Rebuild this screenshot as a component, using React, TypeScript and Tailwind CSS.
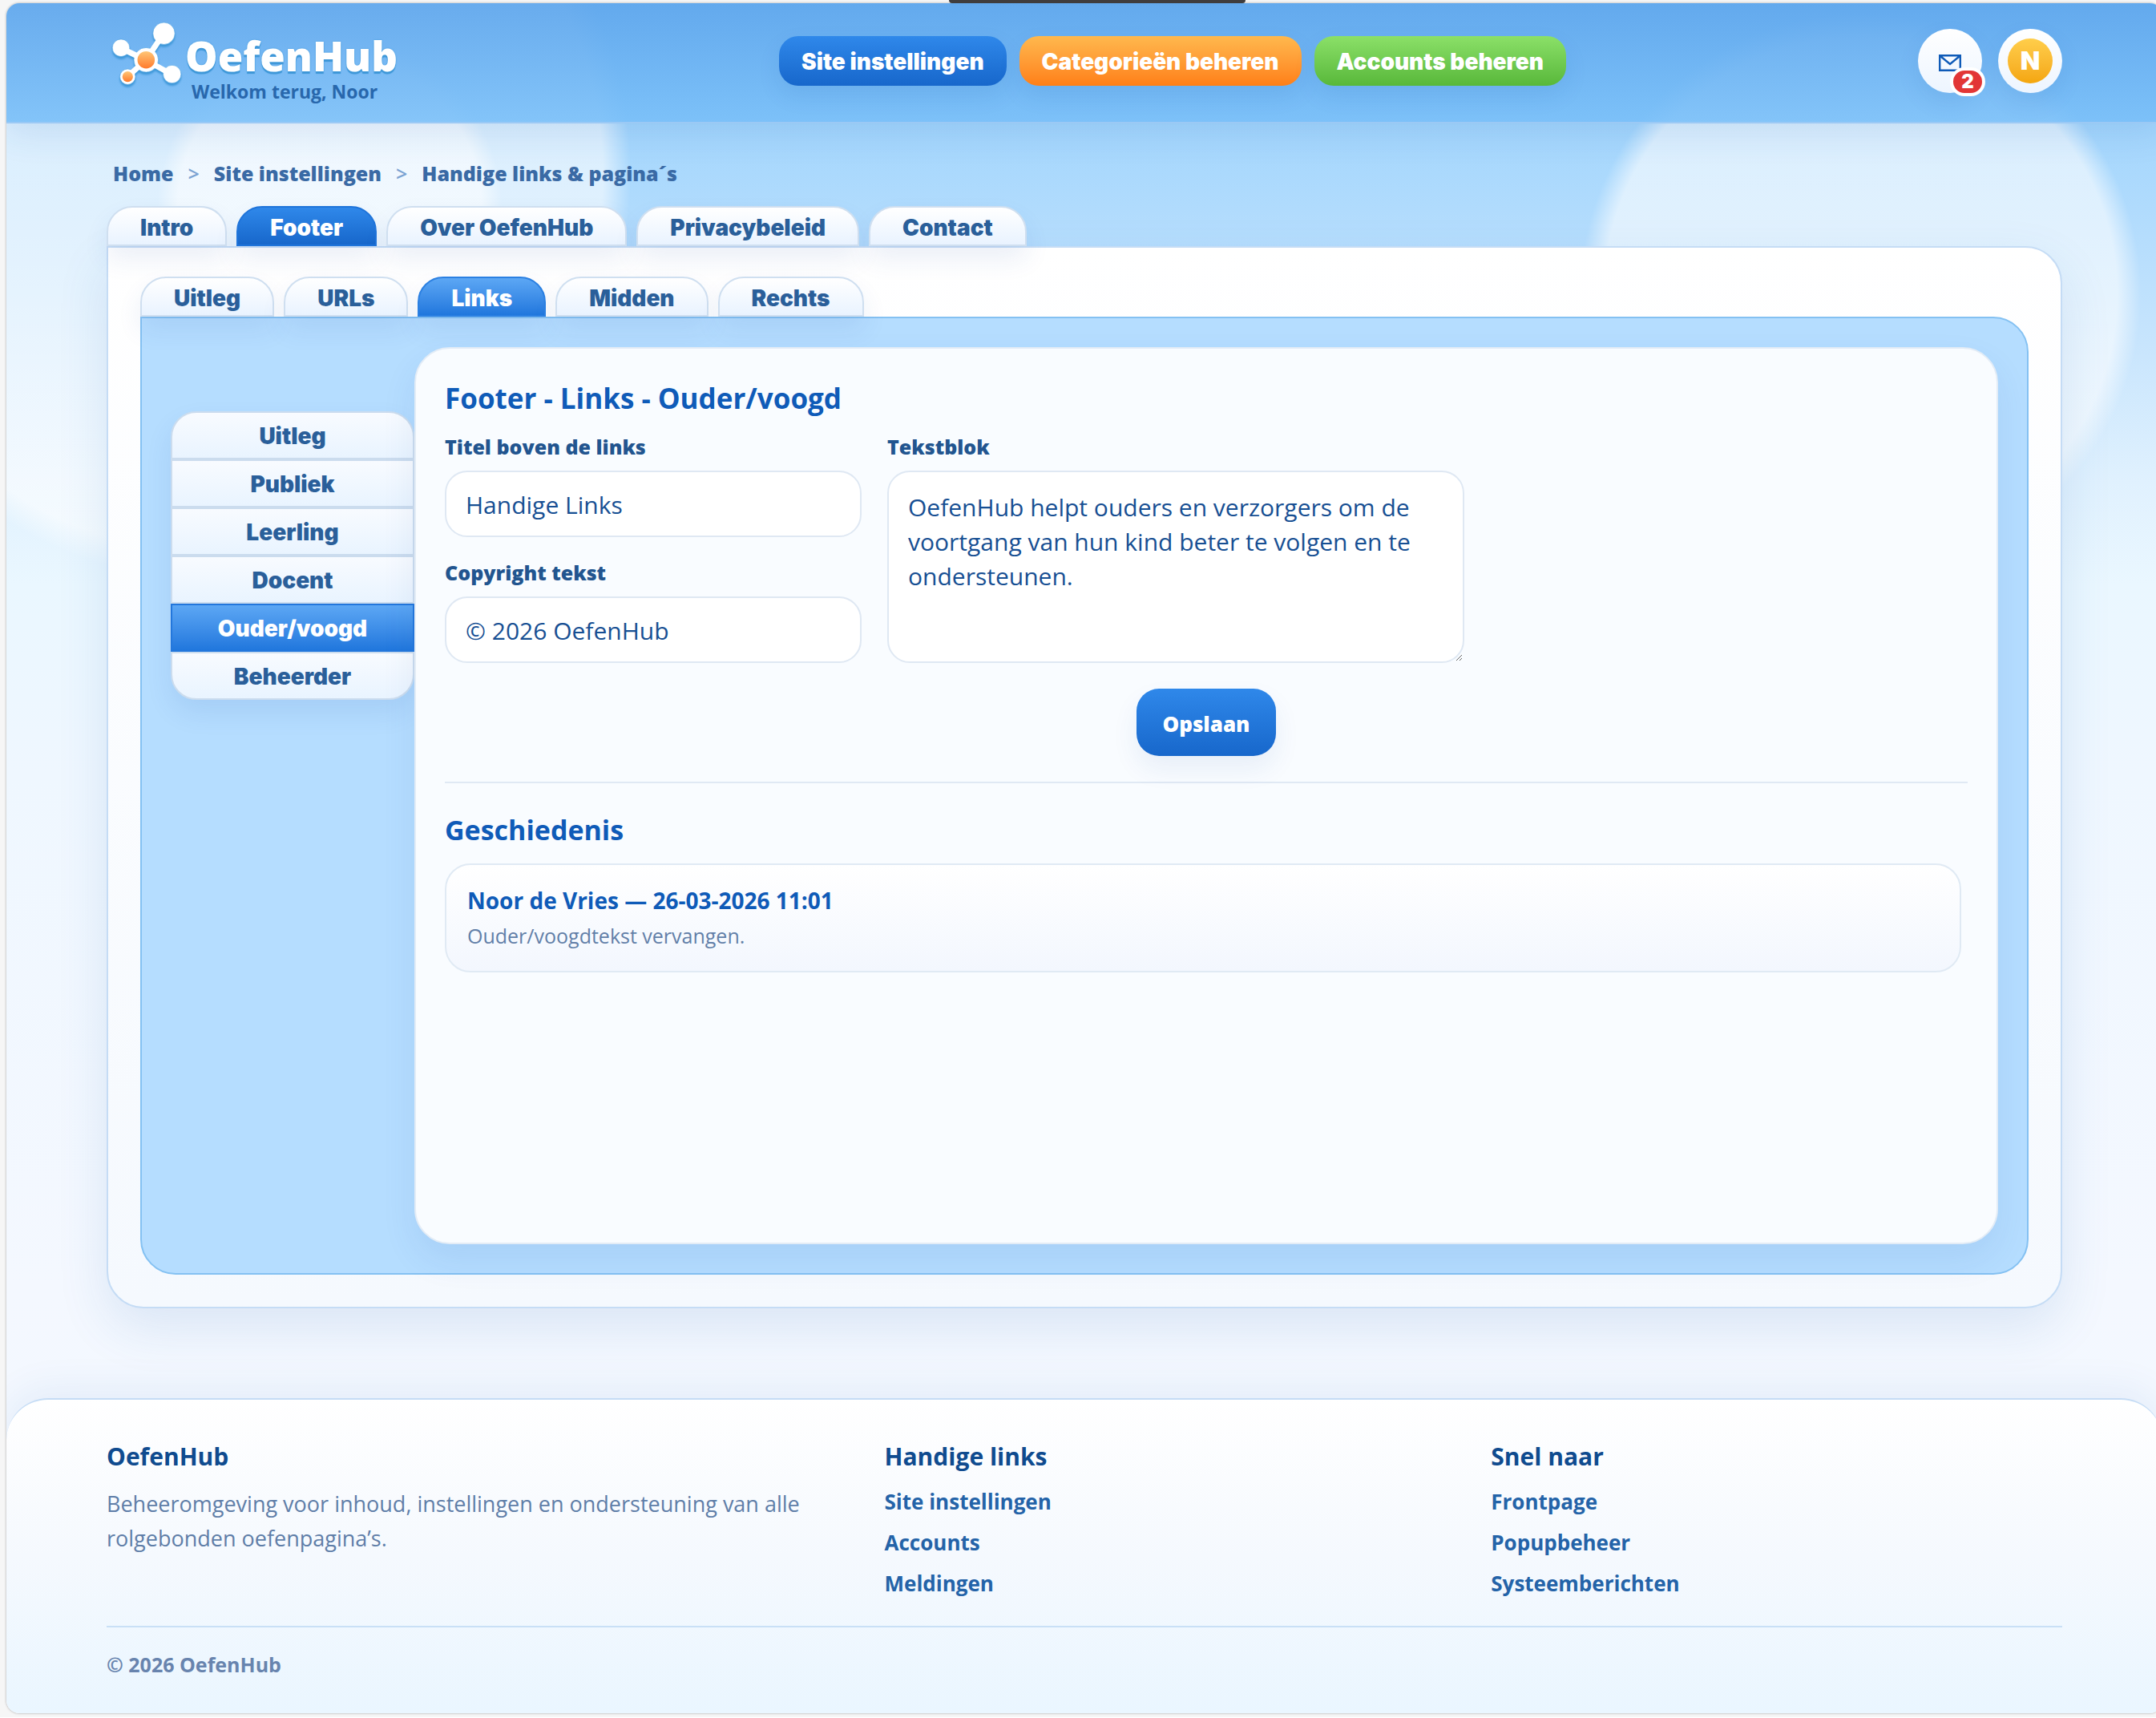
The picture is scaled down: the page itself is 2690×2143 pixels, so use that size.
import { useState } from "react";

const navButtons = [
  { label: "Site instellingen", className: "from-[#2f88ea] to-[#1767cb]" },
  { label: "Categorieën beheren", className: "from-[#ffb84d] to-[#ff7f15]" },
  { label: "Accounts beheren", className: "from-[#8be068] to-[#58b83a]" },
];

const crumbs = ["Home", "Site instellingen", "Handige links & pagina´s"];
const pageTabs = ["Intro", "Footer", "Over OefenHub", "Privacybeleid", "Contact"];
const footerTabs = ["Uitleg", "URLs", "Links", "Midden", "Rechts"];
const roles = ["Uitleg", "Publiek", "Leerling", "Docent", "Ouder/voogd", "Beheerder"];

const footerColumns = [
  { title: "Handige links", links: ["Site instellingen", "Accounts", "Meldingen"] },
  { title: "Snel naar", links: ["Frontpage", "Popupbeheer", "Systeemberichten"] },
];

function LogoMark() {
  return (
    <svg
      viewBox="0 0 98 92"
      className="h-[92px] w-[98px] shrink-0 drop-shadow-[0_3px_1px_#3d97d8]"
      aria-hidden="true"
    >
      <defs>
        <linearGradient id="orange" x1="0" y1="0" x2="0" y2="1">
          <stop offset="0" stopColor="#ffc676" />
          <stop offset="1" stopColor="#ff7a2c" />
        </linearGradient>
      </defs>
      <g fill="#fff" stroke="#4a9fe0" strokeWidth="0.6">
        <circle cx="71.500" cy="17.700" r="13.700" />
        <circle cx="18" cy="35.700" r="10.800" />
        <circle cx="81.700" cy="68.500" r="11.200" />
        <circle cx="26.300" cy="71.700" r="9.700" />
        <circle cx="49.300" cy="50.700" r="15.300" />
      </g>
      <path d="M49 51 69 21M49 51 22 38M49 51 78 67M49 51 29 69" stroke="#fff" strokeWidth="7" />
      <circle cx="49.300" cy="50.700" r="10.800" fill="url(#orange)" />
      <circle cx="26.300" cy="71.700" r="6.600" fill="url(#orange)" />
    </svg>
  );
}

function Header() {
  return (
    <header className="border-b-2 border-[#9bc9f5] bg-linear-to-b from-[#5fa6ec]/92 to-[#77bef8]/88 pt-5 pb-6 shadow-[0_12px_40px_rgba(30,90,170,0.12)]">
      <div className="mx-auto flex w-[91%] max-w-[2440px] items-center justify-between">
        <a href="#" className="flex h-[104px] w-[400px]">
          <LogoMark />
          <span className="flex flex-col pt-3">
            <span className="text-[51px] leading-[66px] font-extrabold text-white [text-shadow:0_3px_1px_#3d97d8,0_0_2px_#3d97d8]">
              OefenHub
            </span>
            <span className="pl-2 text-[23px] leading-6 font-bold text-[#2867ac]">Welkom terug, Noor</span>
          </span>
        </a>

        <nav className="flex gap-4 font-['Inter']">
          {navButtons.map(b => (
            <button
              key={b.label}
              className={`h-[62px] rounded-3xl bg-linear-to-b px-7 pt-0.5 text-[28px] font-black text-white shadow-[0_12px_28px_rgba(30,90,170,0.1)] ${b.className}`}
            >
              {b.label}
            </button>
          ))}
        </nav>

        <div className="flex gap-5 font-['Inter']">
          <button
            aria-label="Berichten"
            className="relative flex size-20 items-center justify-center rounded-full bg-linear-to-b from-white to-[#edf5ff] shadow-[0_12px_28px_rgba(30,90,170,0.1)]"
          >
            <svg viewBox="0 0 28 21" className="mt-1 h-[21px] w-7" fill="none" stroke="#0f5bb8" strokeWidth="2.4">
              <path d="M1.200 1.200h25.600v18.600H1.200zM2 2l12 10L26 2" />
            </svg>
            <span className="absolute -right-1 -bottom-1 flex h-9 w-11 items-center justify-center rounded-full border-4 border-white bg-[#e23636] text-[24px] font-black text-white">
              2
            </span>
          </button>
          <button
            aria-label="Profiel"
            className="flex size-20 items-center justify-center rounded-full bg-linear-to-b from-white to-[#edf5ff] shadow-[0_12px_28px_rgba(30,90,170,0.1)]"
          >
            <span className="flex size-14 items-center justify-center rounded-full bg-linear-to-b from-[#ffce4a] to-[#f4a60b] text-[32px] font-black text-white">
              N
            </span>
          </button>
        </div>
      </div>
    </header>
  );
}

function Tabs({
  items,
  active,
  onSelect,
  activeClass,
}: {
  items: string[];
  active: string;
  onSelect: (item: string) => void;
  activeClass: string;
}) {
  return (
    <div role="tablist" className="flex gap-3 font-['Inter']">
      {items.map(item => (
        <button
          key={item}
          role="tab"
          aria-selected={item === active}
          onClick={() => onSelect(item)}
          className={`h-[50px] rounded-t-[32px] border-2 px-10 pt-1 text-[28px] leading-8 font-black shadow-[0_16px_32px_rgba(30,80,170,0.09)] ${
            item === active
              ? `bg-linear-to-b text-white ${activeClass}`
              : "border-[#cfdff0] bg-linear-to-b from-white to-[#e9f3ff] text-[#2a5f9a]"
          }`}
        >
          {item}
        </button>
      ))}
    </div>
  );
}

function Sidebar() {
  const [role, setRole] = useState("Ouder/voogd");

  return (
    <div className="w-[304px] shrink-0 pt-20 font-['Inter']">
      <div className="flex flex-col rounded-[32px] shadow-[0_16px_32px_rgba(30,80,170,0.1)]">
        {roles.map(r => (
          <button
            key={r}
            onClick={() => setRole(r)}
            className={`h-[60px] border-2 pt-0.5 text-[28px] font-black first:rounded-t-[32px] last:rounded-b-[32px] ${
              r === role
                ? "border-[#2377dc] bg-linear-to-b from-[#5ca7f4] to-[#2077dd] text-white"
                : "border-[#cbdcee] bg-linear-to-b from-[#f8fbff] to-[#e9f4ff] text-[#2a5f9a]"
            }`}
          >
            {r}
          </button>
        ))}
      </div>
    </div>
  );
}

const labelClass = "block text-[25px] leading-8 font-extrabold text-[#22558f]";
const fieldClass = "block w-full rounded-[28px] border-2 border-[#dfe8f3] bg-white px-6 text-[30px] text-[#174f93]";

function FooterForm() {
  const [title, setTitle] = useState("Handige Links");
  const [copyright, setCopyright] = useState("© 2026 OefenHub");
  const [text, setText] = useState(
    "OefenHub helpt ouders en verzorgers om de voortgang van hun kind beter te volgen en te ondersteunen."
  );

  return (
    <form onSubmit={e => e.preventDefault()} className="border-b-2 border-[#e0e9f4] pb-8">
      <h2 className="text-[35px] leading-[52px] font-bold text-[#0f5bb8]">Footer - Links - Ouder/voogd</h2>
      <div className="mt-[18px] flex gap-8">
        <div className="w-[520px]">
          <label htmlFor="titel" className={labelClass}>
            Titel boven de links
          </label>
          <input
            id="titel"
            value={title}
            onChange={e => setTitle(e.target.value)}
            className={`${fieldClass} mt-3.5 h-[83px] pt-0.5`}
          />
          <label htmlFor="copyright" className={`${labelClass} mt-7`}>
            Copyright tekst
          </label>
          <input
            id="copyright"
            value={copyright}
            onChange={e => setCopyright(e.target.value)}
            className={`${fieldClass} mt-3.5 h-[83px] pt-0.5`}
          />
        </div>
        <div className="w-[720px]">
          <label htmlFor="tekstblok" className={labelClass}>
            Tekstblok
          </label>
          <textarea
            id="tekstblok"
            value={text}
            onChange={e => setText(e.target.value)}
            className={`${fieldClass} mt-3.5 h-60 py-[22px] leading-[43px]`}
          />
        </div>
      </div>
      <button className="mx-auto mt-8 block h-[84px] rounded-[28px] bg-linear-to-b from-[#2f88ea] to-[#1767cb] px-8 pt-1 text-[26px] font-extrabold text-white shadow-[0_16px_32px_rgba(30,80,170,0.08)]">
        Opslaan
      </button>
    </form>
  );
}

function History() {
  return (
    <section className="pt-[34px]">
      <h2 className="text-[34px] leading-[48px] font-bold text-[#0f5bb8]">Geschiedenis</h2>
      <article className="mt-[18px] mr-2 rounded-[32px] border-2 border-[#e0eaf4] bg-linear-to-b from-white to-[#f3f7fe] px-[26px] py-6">
        <h3 className="text-[28px] leading-10 font-bold text-[#0f5bb8]">Noor de Vries — 26-03-2026 11:01</h3>
        <p className="mt-1 text-[25px] leading-10 text-[#627fa8]">Ouder/voogdtekst vervangen.</p>
      </article>
    </section>
  );
}

function Footer() {
  return (
    <footer className="rounded-t-[52px] rounded-b-2xl border-t-2 border-[#c5dcf5] bg-linear-to-b from-white via-[#f5f9fe] to-[#eaf6ff] shadow-[0_-12px_48px_rgba(30,90,170,0.07)]">
      <div className="mx-auto w-[91%] max-w-[2440px]">
        <div className="grid grid-cols-[1.3fr_1fr_1fr] gap-11 border-b-2 border-[#c9e0f6] pt-12 pb-[33px]">
          <div>
            <h2 className="text-[30px] leading-[46px] font-bold text-[#0f4b8f]">OefenHub</h2>
            <p className="mt-3.5 text-[27px] leading-[43px] text-[#5f7ea8]">
              Beheeromgeving voor inhoud, instellingen en ondersteuning van alle rolgebonden oefenpagina’s.
            </p>
          </div>
          {footerColumns.map(col => (
            <nav key={col.title}>
              <h2 className="text-[30px] leading-[46px] font-bold text-[#0f4b8f]">{col.title}</h2>
              <ul className="mt-3.5 space-y-3">
                {col.links.map(l => (
                  <li key={l} className="h-[39px]">
                    <a href="#" className="text-[26px] leading-[39px] font-bold text-[#2463a8]">
                      {l}
                    </a>
                  </li>
                ))}
              </ul>
            </nav>
          ))}
        </div>
        <p className="pt-7 pb-[43px] text-[25px] leading-9 font-bold text-[#6884ae]">© 2026 OefenHub</p>
      </div>
    </footer>
  );
}

export default function App() {
  const [pageTab, setPageTab] = useState("Footer");
  const [footerTab, setFooterTab] = useState("Links");

  return (
    <div className="overflow-hidden bg-[#f6f6f6] pb-[5px] font-['Open_Sans','Noto_Sans',sans-serif]">
      <div className="flex h-1 justify-center pl-12">
        <div className="w-[370px] rounded-b-lg bg-[#3f3d3e]" />
      </div>
      <div className="ml-2 w-full overflow-hidden rounded-2xl bg-[radial-gradient(circle_at_15%_12%,rgba(255,255,255,0.55)_190px,transparent_215px),radial-gradient(circle_at_10%_10%,rgba(255,255,255,0.6)_475px,transparent_510px),radial-gradient(circle_at_86%_17%,rgba(255,255,255,0.6)_320px,transparent_350px),linear-gradient(180deg,#92cffc_0%,#b0dbfd_12%,#c8e5fd_20%,#e0f1fe_28%,#eaf7ff_34%,#eff7ff_45%,#f4f8ff_75%,#f1f8ff_100%)] shadow-[0_0_3px_rgba(0,0,0,0.35)]">
        <Header />

        <main className="mx-auto w-[91%] max-w-[2440px] pt-[45px] pb-28">
          <nav aria-label="Kruimelpad" className="mb-[22px] flex h-9 items-center gap-[18px] pl-2 text-[25px] font-extrabold">
            {crumbs.map((c, i) => (
              <span key={c} className="flex gap-[18px]">
                {i > 0 && <span className="font-semibold text-[#7ba3d2]">&gt;</span>}
                <a href="#" className="text-[#3a6aa5]">
                  {c}
                </a>
              </span>
            ))}
          </nav>

          <Tabs
            items={pageTabs}
            active={pageTab}
            onSelect={setPageTab}
            activeClass="border-[#1f74da] from-[#2f88ea] to-[#1767cb]"
          />
          <div className="rounded-[46px] rounded-tl-none border-2 border-[#c5dcf5] bg-linear-to-b from-white to-[#f5f9fe] px-10 pt-9 pb-10 shadow-[0_24px_64px_rgba(30,100,170,0.12)]">
            <Tabs
              items={footerTabs}
              active={footerTab}
              onSelect={setFooterTab}
              activeClass="border-[#2b80e2] from-[#5ca7f4] to-[#2077dd]"
            />
            <div className="flex rounded-[44px] rounded-tl-none border-2 border-[#84c1f2] bg-[#b5ddff] p-9">
              <Sidebar />
              <div className="min-h-[1119px] flex-1 rounded-[44px] border-2 border-[#e3ecf6] bg-[#f9fcff] p-9 shadow-[0_20px_44px_rgba(30,80,170,0.09)]">
                <FooterForm />
                <History />
              </div>
            </div>
          </div>
        </main>

        <Footer />
      </div>
    </div>
  );
}
